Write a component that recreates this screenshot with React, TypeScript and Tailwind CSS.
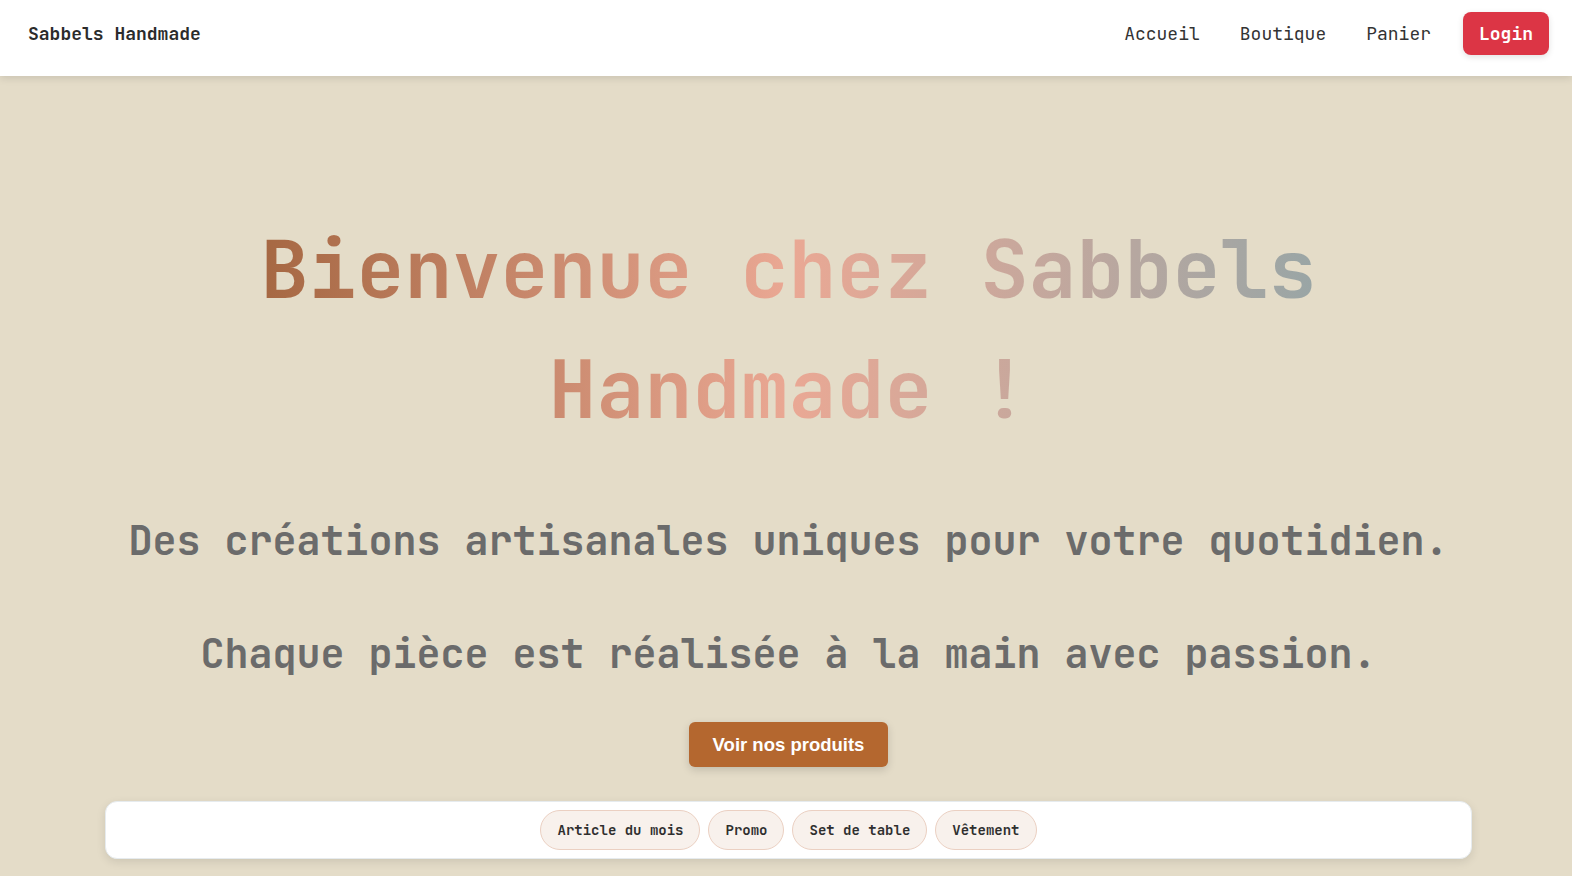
import React from 'react'

const mono = { fontFamily: '"JetBrains Mono", "DejaVu Sans Mono", monospace' }

const NavLink: React.FC<{ children: React.ReactNode }> = ({ children }) => (
  <a href="#" className="text-[18px] leading-[27px] text-[#333333]">
    {children}
  </a>
)

const Pill: React.FC<{ children: React.ReactNode }> = ({ children }) => (
  <button className="rounded-full border border-[#ebd0c2] bg-[#f8f1ec] px-4 py-[9px] text-[14px] leading-5 font-semibold text-[#2f2f2f]">
    {children}
  </button>
)

const App: React.FC = () => {
  return (
    <div className="min-h-screen bg-[#e4dcc8]" style={mono}>
      {/* Header */}
      <header className="h-[76px] bg-white shadow-[0_2px_8px_rgba(0,0,0,0.12)] pt-3 pl-7 pr-[23px] relative">
        <div className="flex items-center justify-between">
          <a href="#" className="text-[18px] leading-[27px] font-semibold text-[#2b2b2b]">
            Sabbels Handmade
          </a>
          <nav className="flex items-center">
            <div className="flex items-center gap-10">
              <NavLink>Accueil</NavLink>
              <NavLink>Boutique</NavLink>
              <NavLink>Panier</NavLink>
            </div>
            <button className="ml-8 rounded-lg bg-[#dc3545] px-4 py-2 text-[18px] leading-[27px] font-bold text-white shadow-[0_2px_6px_rgba(0,0,0,0.12)]">
              Login
            </button>
          </nav>
        </div>
      </header>

      {/* Hero */}
      <main className="pt-[133px] pl-[37px] pr-8 text-center">
        <h1 className="mx-auto max-w-[1100px] text-[80px] leading-[120px] font-bold bg-gradient-to-r from-[#a3653f] via-[#eaa894] to-[#95a5a6] bg-clip-text text-transparent">
          Bienvenue chez Sabbels Handmade !
        </h1>
        <p className="mt-[62px] text-[40px] leading-[60px] font-bold text-[#6b6b6b]">
          Des créations artisanales uniques pour votre quotidien.
        </p>
        <p className="mt-[53px] text-[40px] leading-[60px] font-bold text-[#6b6b6b]">
          Chaque pièce est réalisée à la main avec passion.
        </p>
        <button
          className="mt-[38px] rounded-md bg-[#b4672f] px-6 py-[9px] text-[18.5px] leading-[27px] font-bold text-white shadow-[0_3px_8px_rgba(0,0,0,0.15)]"
          style={{ fontFamily: '"Liberation Sans", Arial, sans-serif' }}
        >
          Voir nos produits
        </button>

        <div className="mx-auto mt-[34px] max-w-[1367px] rounded-xl border border-[#e6ebee] bg-white p-2 shadow-[0_3px_10px_rgba(0,0,0,0.1)]">
          <div className="flex justify-center gap-2">
            <Pill>Article du mois</Pill>
            <Pill>Promo</Pill>
            <Pill>Set de table</Pill>
            <Pill>Vêtement</Pill>
          </div>
        </div>
      </main>
    </div>
  )
}

export default App
